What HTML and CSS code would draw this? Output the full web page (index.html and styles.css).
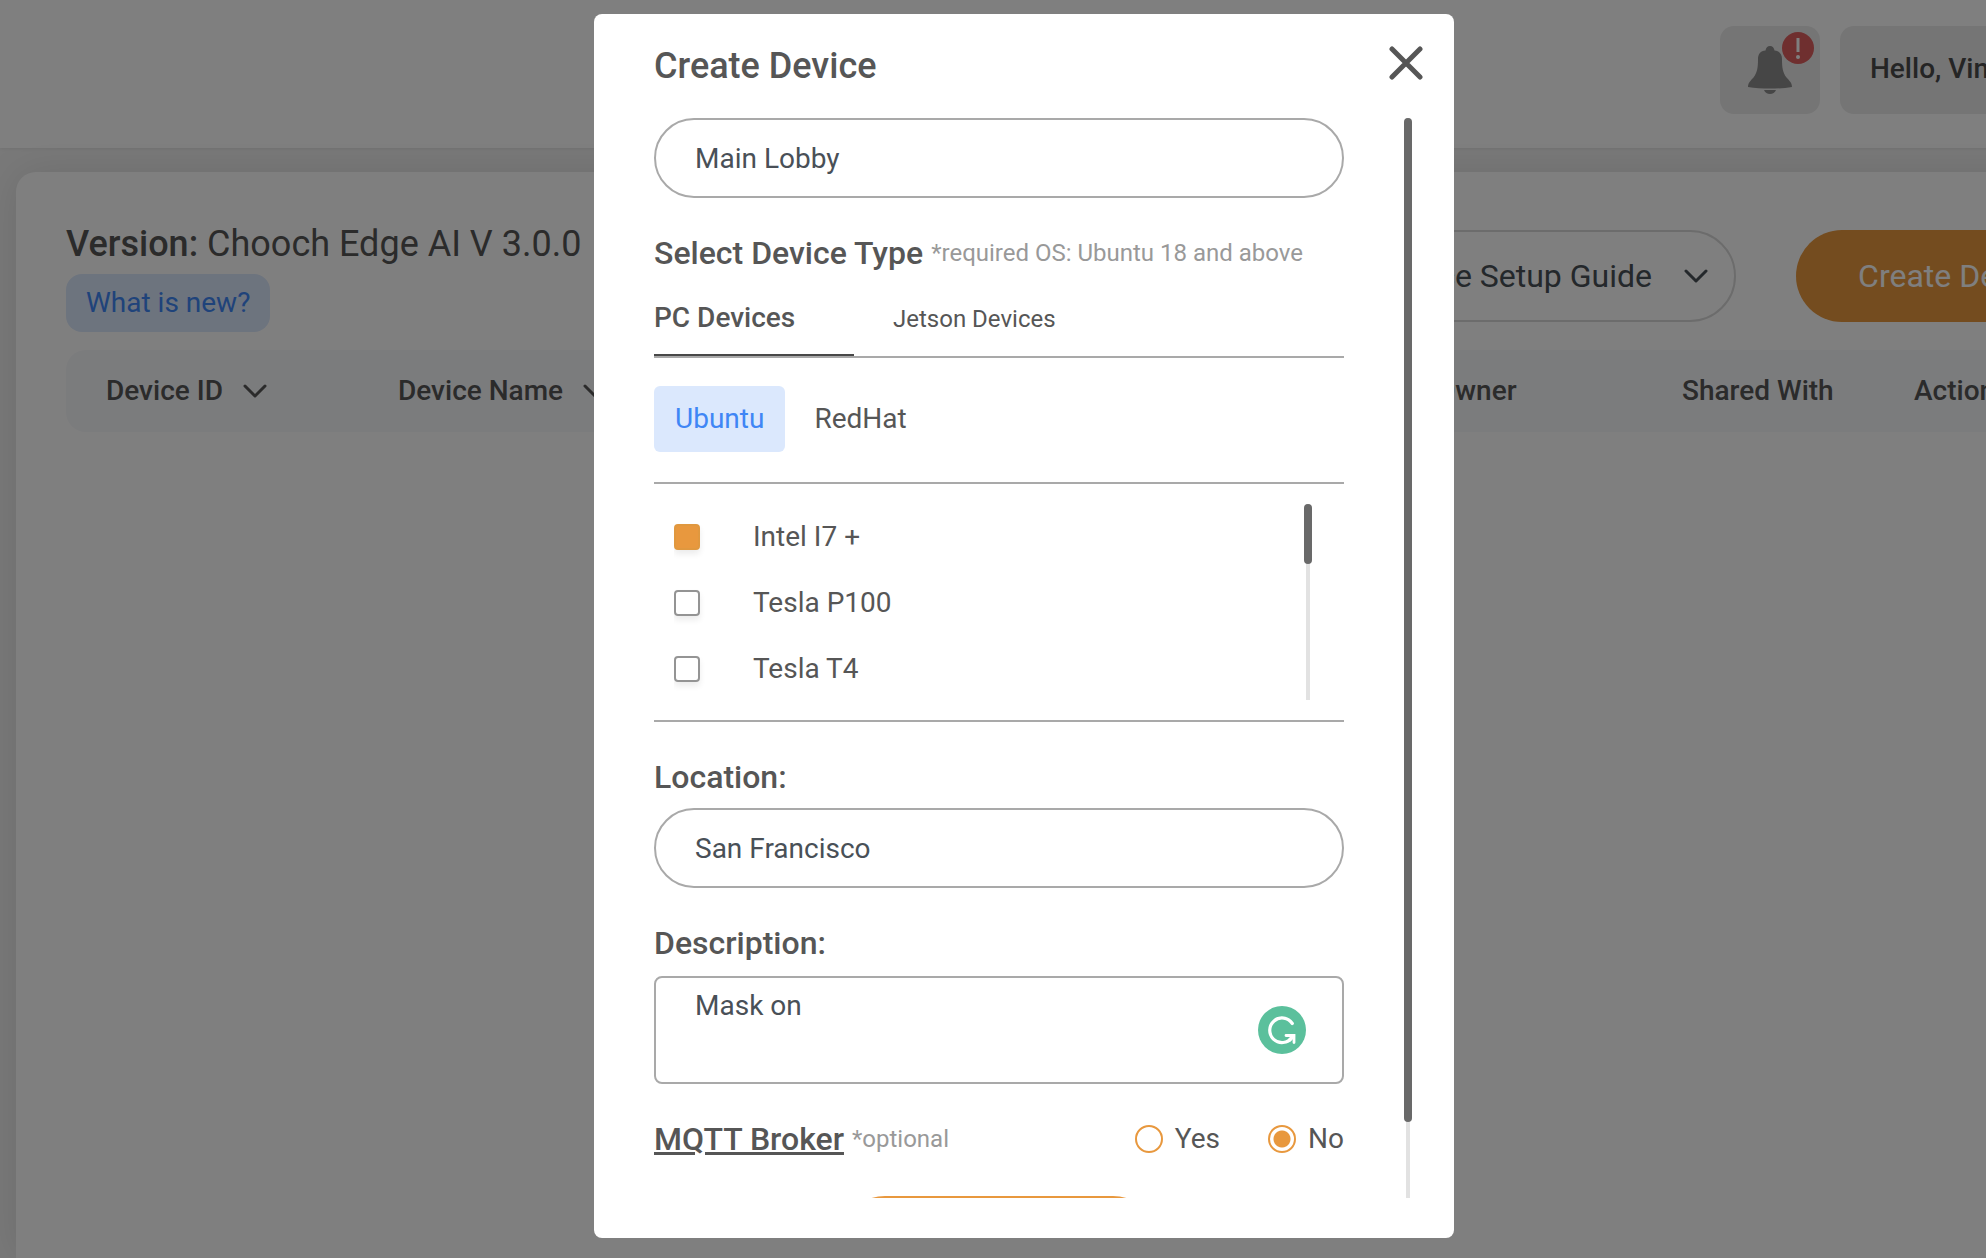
FILE: index.html
```html
<!DOCTYPE html>
<html lang="en">
<head>
<meta charset="utf-8">
<title>Create Device</title>
<link rel="stylesheet" href="styles.css">
</head>
<body>
<div class="app">
  <header class="topbar">
    <button class="tile bell" type="button" aria-label="Notifications">
      <svg width="44" height="48" viewBox="0 0 44 48" aria-hidden="true">
        <path fill="currentColor" d="M22 0c2.500 0 4.200 2 4.500 4.500C31.500 5 34 8 34 13c0 9 .8 13.500 4.500 18.500C41 34.500 44 36.500 44 41c-7 1.300-14 1.500-22 1.500S7 42.300 0 41c0-4.500 3-6.500 5.500-9.500C9.200 26.500 10 22 10 13c0-5 2.500-8 7.500-8.500C17.800 2 19.500 0 22 0z"/>
        <path fill="currentColor" d="M16 44h12c-1 2.600-3.300 4-6 4s-5-1.400-6-4z"/>
      </svg>
      <svg class="badge" width="32" height="32" viewBox="0 0 32 32" aria-hidden="true">
        <circle cx="16" cy="16" r="16" fill="#de5f5f"/>
        <path d="M16 6v14" stroke="#fff" stroke-width="3"/>
        <circle cx="16" cy="25" r="2" fill="#fff"/>
      </svg>
    </button>
    <button class="tile account" type="button">Hello, Vince</button>
  </header>

  <main class="card">
    <div class="toolbar">
      <div class="version">
        <p class="version-line"><b>Version:</b> Chooch Edge AI V 3.0.0</p>
        <a class="news" href="#">What is new?</a>
      </div>
      <div class="actions">
        <button class="guide" type="button">Device Setup Guide
          <svg class="chevron" width="24" height="14" viewBox="0 0 24 14" aria-hidden="true"><path d="M2 2l10 10L22 2"/></svg>
        </button>
        <button class="create" type="button">Create Device</button>
      </div>
    </div>
    <table class="devices">
      <thead>
        <tr>
          <th class="col-id" scope="col"><span class="sort">Device ID
            <svg class="chevron" width="24" height="14" viewBox="0 0 24 14" aria-hidden="true"><path d="M2 2l10 10L22 2"/></svg></span></th>
          <th scope="col"><span class="sort">Device Name
            <svg class="chevron" width="24" height="14" viewBox="0 0 24 14" aria-hidden="true"><path d="M2 2l10 10L22 2"/></svg></span></th>
          <th class="col-owner" scope="col">Owner</th>
          <th class="col-shared" scope="col">Shared With</th>
          <th class="col-action" scope="col">Actions</th>
        </tr>
      </thead>
    </table>
  </main>
</div>

<div class="overlay">
  <section class="modal" role="dialog" aria-modal="true" aria-labelledby="modal-title">
    <div class="modal-head">
      <h1 class="modal-title" id="modal-title">Create Device</h1>
      <button class="close" type="button" aria-label="Close">
        <svg width="34" height="34" viewBox="0 0 34 34" aria-hidden="true"><path d="M3 3l28 28M31 3L3 31"/></svg>
      </button>
    </div>
    <div class="modal-body">
      <form class="form">
        <input class="field" type="text" aria-label="Device name" value="Main Lobby">

        <h2 class="label heading">Select Device Type <small class="note">*required OS: Ubuntu 18 and above</small></h2>
        <div class="tabs">
          <button class="tab tab-active" type="button">PC Devices</button>
          <button class="tab" type="button">Jetson Devices</button>
        </div>
        <div class="systems">
          <button class="system system-active" type="button">Ubuntu</button>
          <button class="system" type="button">RedHat</button>
        </div>
        <div class="models">
          <div class="model-list">
            <label class="model"><input class="check" type="checkbox" checked>Intel I7 +</label>
            <label class="model"><input class="check" type="checkbox">Tesla P100</label>
            <label class="model"><input class="check" type="checkbox">Tesla T4</label>
          </div>
          <div class="rail"><div class="thumb thumb-models"></div></div>
        </div>

        <label class="label" for="location">Location:</label>
        <input class="field field-labelled" id="location" type="text" value="San Francisco">

        <label class="label" for="description">Description:</label>
        <div class="area-wrap">
          <textarea class="area" id="description">Mask on</textarea>
          <svg class="grammar" width="48" height="48" viewBox="0 0 48 48" aria-hidden="true">
            <circle cx="24" cy="24" r="24" fill="#5bc09c"/>
            <g fill="none" stroke="#fff" stroke-width="3.200" stroke-linecap="round">
              <path d="M34.300 17.500A12.300 12.300 0 1 0 34 31.500"/>
              <path d="M28 29.500h8v7" stroke-width="2.800"/>
              <path d="M31.500 34l4-4"/>
            </g>
          </svg>
        </div>

        <div class="broker">
          <h2 class="broker-title heading"><u>MQTT Broker</u> <small class="note">*optional</small></h2>
          <div class="choices">
            <label class="choice"><input class="radio" type="radio" name="broker">Yes</label>
            <label class="choice"><input class="radio" type="radio" name="broker" checked>No</label>
          </div>
        </div>
        <button class="create submit" type="submit">Create Device</button>
      </form>
      <div class="rail"><div class="thumb thumb-body"></div></div>
    </div>
  </section>
</div>
</body>
</html>
```

FILE: styles.css
```css
* {
  box-sizing: border-box;
}

body {
  margin: 0;
  height: 100vh;
  overflow: hidden;
  background: #f2f2f2;
  color: #565656;
  font: 28px/32px Roboto, "Liberation Sans", sans-serif;
}

button,
input,
textarea {
  margin: 0;
  border: 0;
  background: none;
  color: inherit;
  font: inherit;
}

button {
  padding: 0;
}

h1,
h2,
p {
  margin: 0;
}

/* Page behind the dialog; its content is wider than the window */
.app {
  display: flex;
  flex-direction: column;
  width: calc(100% + 196px);
  height: 100%;
}

.topbar {
  display: flex;
  justify-content: flex-end;
  gap: 20px;
  padding: 26px 42px 34px;
  background: #fff;
  box-shadow: 0 0 4px rgba(0, 0, 0, 0.1);
}

.tile {
  height: 88px;
  border-radius: 14px;
  background: #ebebeb;
}

.bell {
  position: relative;
  display: grid;
  place-items: center;
  width: 100px;
  color: #8c8c8c;
}

.badge {
  position: absolute;
  top: 6px;
  right: 6px;
}

.account {
  width: 300px;
  padding: 0 30px 2px;
  color: #4a4a4a;
  font-weight: 500;
  text-align: left;
}

.card {
  flex: 1;
  margin: 24px 16px 0;
  padding: 52px 50px 0;
  border-radius: 20px 20px 0 0;
  background: #fff;
  box-shadow: 0 0 40px rgba(0, 0, 0, 0.1);
}

.toolbar {
  display: flex;
  justify-content: space-between;
  align-items: flex-start;
  margin-bottom: 18px;
}

.version {
  display: flex;
  flex-direction: column;
  align-items: flex-start;
  gap: 10px;
}

.version-line {
  font-size: 36px;
  line-height: 40px;
}

.version-line b {
  font-weight: 500;
}

.news {
  padding: 13px 20px;
  border-radius: 16px;
  background: #dbe8fd;
  color: #3f86f5;
  text-decoration: none;
}

.actions {
  display: flex;
  gap: 60px;
  padding-top: 6px;
}

.guide {
  display: flex;
  align-items: center;
  gap: 32px;
  height: 92px;
  padding: 0 26px 0 60px;
  border: 2px solid #d9d9d9;
  border-radius: 46px;
  color: #495057;
  font-size: 32px;
}

.create {
  width: 320px;
  height: 92px;
  border-radius: 46px;
  background: #e8983e;
  color: #fff;
  font-size: 32px;
}

.chevron {
  fill: none;
  stroke: currentColor;
  stroke-width: 3;
  stroke-linecap: round;
  stroke-linejoin: round;
}

.devices {
  width: 100%;
  table-layout: fixed;
  border-spacing: 0;
}

.devices th {
  height: 82px;
  padding: 0 0 0 40px;
  background: #f7f8fb;
  font-weight: 500;
  text-align: left;
}

.devices th:first-child {
  border-radius: 20px 0 0 20px;
}

.devices th:last-child {
  border-radius: 0 20px 20px 0;
}

.sort {
  display: flex;
  align-items: center;
  gap: 20px;
}

.col-id {
  width: 292px;
}

.col-owner {
  width: 246px;
}

.col-shared {
  width: 232px;
}

.col-action {
  width: 242px;
}

/* Dialog */
.overlay {
  position: fixed;
  inset: 0 -62px 0 0;
  display: flex;
  justify-content: center;
  padding: 14px 0 20px;
  background: rgba(0, 0, 0, 0.5);
}

.modal {
  display: flex;
  flex-direction: column;
  width: 860px;
  padding-bottom: 40px;
  border-radius: 8px;
  background: #fff;
}

.modal-head {
  display: flex;
  justify-content: space-between;
  align-items: flex-start;
  padding: 32px 31px 32px 60px;
}

.modal-title {
  font-size: 36px;
  line-height: 40px;
  font-weight: 500;
}

.close {
  display: flex;
}

.close path {
  stroke: #565656;
  stroke-width: 5;
  stroke-linecap: round;
}

.modal-body {
  display: flex;
  flex: 1;
  gap: 60px;
  min-height: 0;
  padding: 0 42px 0 60px;
  overflow: hidden;
}

.form {
  display: flex;
  flex: 1;
  flex-direction: column;
}

.form > * {
  flex-shrink: 0;
}

.field {
  width: 100%;
  height: 80px;
  padding: 0 39px;
  border: 2px solid #a9a9a9;
  border-radius: 40px;
  color: #495057;
}

.field-labelled {
  margin-top: 12px;
}

.label,
.broker-title {
  font-size: 32px;
  line-height: 38px;
  font-weight: 500;
}

.label {
  margin-top: 36px;
}

.heading {
  display: flex;
  align-items: center;
  gap: 8px;
  white-space: nowrap;
}

.note {
  color: #999;
  font-size: 24px;
  font-weight: 400;
}

.tabs {
  display: flex;
  align-items: baseline;
  gap: 39px;
  padding-top: 30px;
  border-bottom: 2px solid #a9a9a9;
}

.tab {
  padding-bottom: 20px;
  border-bottom: 2px solid transparent;
  font-size: 24px;
  line-height: 30px;
}

.tab-active {
  width: 200px;
  border-color: #484848;
  font-size: 28px;
  line-height: 32px;
  font-weight: 500;
  text-align: left;
}

.systems {
  display: flex;
  gap: 8px;
  padding: 28px 0 30px;
}

.system {
  height: 66px;
  padding: 0 21px;
  border-radius: 6px;
}

.system-active {
  background: #dbe8fd;
  color: #3f86f5;
}

.models {
  display: flex;
  height: 240px;
  padding: 20px 32px 20px 20px;
  border: solid #a9a9a9;
  border-width: 2px 0;
}

.model-list {
  flex: 1;
  overflow: hidden;
}

.model {
  display: flex;
  align-items: center;
  gap: 53px;
  height: 66px;
}

.check {
  appearance: none;
  width: 26px;
  height: 26px;
  border: 2px solid #949494;
  border-radius: 4px;
  box-shadow: 0 4px 6px rgba(0, 0, 0, 0.08);
}

.check:checked {
  border-color: #e0983f;
  background: #e8983e;
}

.rail {
  width: 8px;
  background: linear-gradient(#e2e2e2, #e2e2e2) center / 4px 100% no-repeat;
}

.thumb {
  border-radius: 4px;
  background: #696969;
}

.thumb-models {
  height: 60px;
}

.thumb-body {
  height: 93%;
}

.area-wrap {
  position: relative;
  display: flex;
  margin-top: 14px;
}

.area {
  width: 100%;
  height: 108px;
  padding: 12px 39px;
  border: 2px solid #a9a9a9;
  border-radius: 8px;
  color: #495057;
  resize: none;
}

.grammar {
  position: absolute;
  top: 30px;
  right: 38px;
}

.broker {
  display: flex;
  justify-content: space-between;
  align-items: center;
  margin-top: 36px;
}

.choices {
  display: flex;
  gap: 48px;
}

.choice {
  display: flex;
  align-items: center;
  gap: 12px;
}

.radio {
  appearance: none;
  width: 28px;
  height: 28px;
  border: 2px solid #e8983e;
  border-radius: 50%;
}

.radio:checked {
  background: radial-gradient(circle, #e8983e 8px, transparent 9px);
}

.submit {
  align-self: center;
  margin-top: 38px;
}
```
